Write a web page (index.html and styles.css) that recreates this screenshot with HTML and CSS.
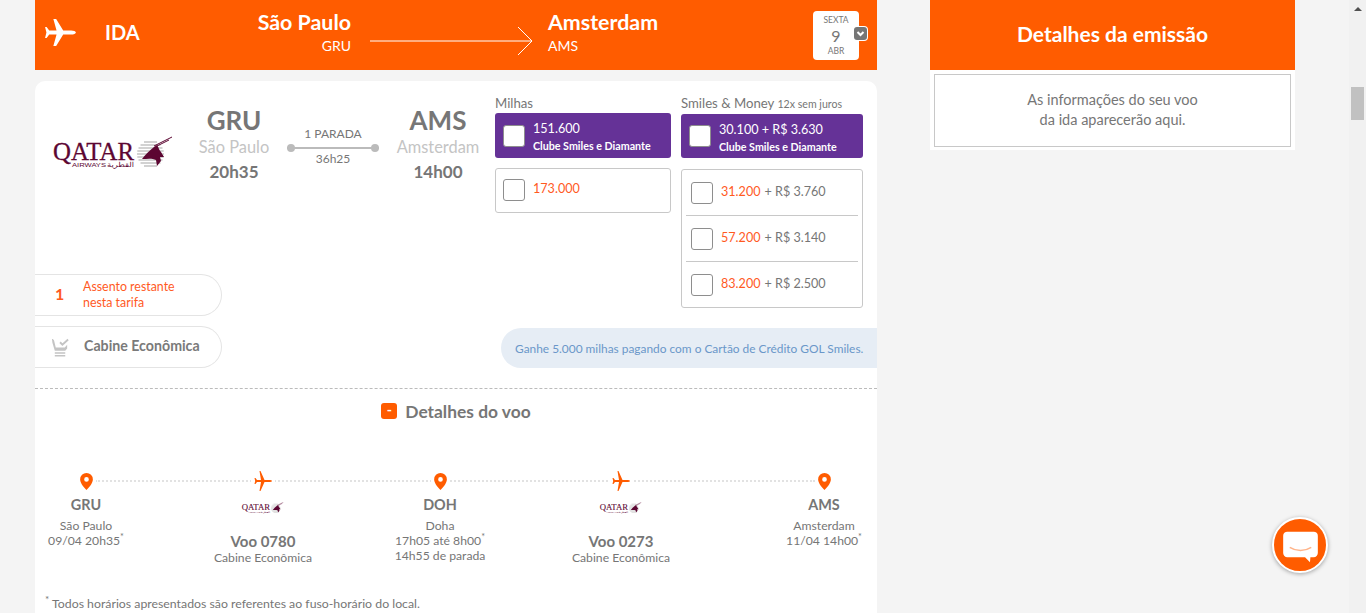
FILE: index.html
```html
<!DOCTYPE html>
<html>
	<head>
		<meta charset="utf-8">
		<title>Detalhes do voo</title>
		<link rel="stylesheet" href="styles.css">
	</head>
	<body>
		<svg class="defs" width="0" height="0">
			<defs>
				<symbol id="plane" viewBox="0 0 32 28">
					<path d="M32 14c0-1.300-2.500-2.200-5-2.200h-8.200L11.500 0H8.600l3.300 11.800H4.300L1.600 8.200H0l1.400 5.800L0 19.800h1.600l2.700-3.600h7.600L8.600 28h2.900l7.300-11.800H27c2.500 0 5-.9 5-2.200z"/>
				</symbol>
				<symbol id="plane-thin" viewBox="0 0 18 20">
					<path d="M18 10c0-.7-1.500-1-3-1H10.500L6.500 0H5.500L7 9H3L1.500 7H.5L1.200 10 .5 13H1.500L3 11H7L5.500 20H6.500L10.500 11H15c1.500 0 3-.3 3-1z"/>
				</symbol>
				<symbol id="pin" viewBox="0 0 12 16">
					<path fill-rule="evenodd" d="M6 0a6 6 0 0 0-6 6c0 3.800 4.500 8.400 6 10 1.500-1.600 6-6.200 6-10a6 6 0 0 0-6-6zm0 3.800a2.200 2.200 0 1 1 0 4.400 2.200 2.200 0 0 1 0-4.400z"/>
				</symbol>
				<symbol id="qatar" viewBox="0 0 122 40">
					<text x="0" y="24" class="q-name" textLength="81" lengthAdjust="spacingAndGlyphs">QATAR</text>
					<text x="19" y="31" class="q-sub" textLength="34" lengthAdjust="spacingAndGlyphs">AIRWAYS</text>
					<text x="54" y="31" class="q-arabic" textLength="27" lengthAdjust="spacingAndGlyphs">القطرية</text>
					<g stroke="#c4c4c4" stroke-width="1.500">
						<path d="M91 6h13M87.500 9h20M85.500 12h24M84.300 15h26.400M84 18h27M84.300 21h26.400M85.500 24h24M87.500 27h20M91 30h13"/>
					</g>
					<path fill="#5c0632" d="M89 23C92 19 96 15 101 11L104 9C106 12 106 14 108 16L111 21 107 21 108 25 104 30 103 24C99 22 94 23 89 23Z"/>
					<path fill="none" stroke="#5c0632" stroke-width="1" d="M101 10 119 1M104 10 116 4"/>
				</symbol>
			</defs>
		</svg>

		<div class="page">
			<!-- coluna do voo -->
			<div class="main">
				<div class="leg-bar">
					<svg class="leg-plane"><use href="#plane"/></svg>
					<span class="leg-type">IDA</span>
					<div class="leg-from">
						<strong>São Paulo</strong>
						<span>GRU</span>
					</div>
					<svg class="leg-arrow" viewBox="0 0 164 30">
						<path d="M0 15h162M148 1l14 14-14 14"/>
					</svg>
					<div class="leg-to">
						<strong>Amsterdam</strong>
						<span>AMS</span>
					</div>
					<div class="leg-date">
						<span>SEXTA</span>
						<b>9</b>
						<span>ABR</span>
						<i class="date-toggle">
							<svg viewBox="0 0 13 13"><path d="M3.500 5 6.500 8 9.500 5"/></svg>
						</i>
					</div>
				</div>

				<div class="card">
					<div class="card-top">
						<div class="flight">
							<div class="route">
								<svg class="logo"><use href="#qatar"/></svg>
								<div class="airport airport-from">
									<b>GRU</b>
									<span>São Paulo</span>
									<strong>20h35</strong>
								</div>
								<div class="stops">
									<span>1 PARADA</span>
									<i class="stops-line"></i>
									<span>36h25</span>
								</div>
								<div class="airport airport-to">
									<b>AMS</b>
									<span>Amsterdam</span>
									<strong>14h00</strong>
								</div>
							</div>
							<div class="pill">
								<b class="pill-num">1</b>
								<span class="pill-seats">Assento restante<br>nesta tarifa</span>
							</div>
							<div class="pill">
								<svg class="pill-seat" viewBox="0 0 20 20">
									<path class="seat-body" d="M1 1c1 0 2 .5 2.300 2L5 10h9.500l2.500-3v4l-2 2.500H4L1.500 5z"/>
									<path class="seat-body" d="M4 15h11v1.500H4zM4 18h11v1.500H4z"/>
									<path class="seat-check" d="M9.500 4.500 12 7 18 1.500"/>
								</svg>
								<span class="pill-cabin">Cabine Econômica</span>
							</div>
						</div>

						<div class="offers">
							<div class="fares">
								<div class="fare-col fare-miles">
									<h4>Milhas</h4>
									<div class="fare-club">
										<i class="check"></i>
										<div class="club-text">
											<p class="club-price">151.600</p>
											<p class="club-name">Clube Smiles e Diamante</p>
										</div>
									</div>
									<div class="fare-list">
										<div class="fare-row">
											<i class="check"></i>
											<span class="miles">173.000</span>
										</div>
									</div>
								</div>
								<div class="fare-col fare-money">
									<h4>Smiles &amp; Money <small>12x sem juros</small></h4>
									<div class="fare-club">
										<i class="check"></i>
										<div class="club-text">
											<p class="club-price">30.100 + R$ 3.630</p>
											<p class="club-name">Clube Smiles e Diamante</p>
										</div>
									</div>
									<div class="fare-list">
										<div class="fare-row">
											<i class="check"></i>
											<span class="miles">31.200</span><span class="money">+ R$ 3.760</span>
										</div>
										<div class="fare-row">
											<i class="check"></i>
											<span class="miles">57.200</span><span class="money">+ R$ 3.140</span>
										</div>
										<div class="fare-row">
											<i class="check"></i>
											<span class="miles">83.200</span><span class="money">+ R$ 2.500</span>
										</div>
									</div>
								</div>
							</div>
							<div class="promo">Ganhe 5.000 milhas pagando com o Cartão de Crédito GOL Smiles.</div>
						</div>
					</div>

					<div class="details">
						<h3 class="details-title"><i class="minus">-</i>Detalhes do voo</h3>
						<div class="timeline">
							<div class="stop">
								<svg class="pin"><use href="#pin"/></svg>
								<b>GRU</b>
								<span>São Paulo</span>
								<span>09/04 20h35<sup>*</sup></span>
							</div>
							<div class="stop">
								<svg class="plane"><use href="#plane-thin"/></svg>
								<svg class="logo-small"><use href="#qatar"/></svg>
								<b>Voo 0780</b>
								<span>Cabine Econômica</span>
							</div>
							<div class="stop">
								<svg class="pin"><use href="#pin"/></svg>
								<b>DOH</b>
								<span>Doha</span>
								<span>17h05 até 8h00<sup>*</sup></span>
								<span>14h55 de parada</span>
							</div>
							<div class="stop">
								<svg class="plane"><use href="#plane-thin"/></svg>
								<svg class="logo-small"><use href="#qatar"/></svg>
								<b>Voo 0273</b>
								<span>Cabine Econômica</span>
							</div>
							<div class="stop stop-last">
								<svg class="pin"><use href="#pin"/></svg>
								<b>AMS</b>
								<span>Amsterdam</span>
								<span>11/04 14h00<sup>*</sup></span>
							</div>
						</div>
						<p class="note"><sup>*</sup> Todos horários apresentados são referentes ao fuso-horário do local.</p>
					</div>
				</div>
			</div>

			<!-- coluna da emissão -->
			<div class="aside">
				<div class="aside-head">Detalhes da emissão</div>
				<div class="aside-body">
					<div class="aside-box">As informações do seu voo<br>da ida aparecerão aqui.</div>
				</div>
			</div>

			<div class="scrollbar">
				<i class="scroll-up"></i>
				<i class="scroll-thumb"></i>
			</div>
		</div>

		<div class="chat">
			<svg viewBox="0 0 44 40">
				<path class="chat-bubble" d="M6 2h32a5 5 0 0 1 5 5v21a5 5 0 0 1-5 5h-4l-.5 6-6-6H6a5 5 0 0 1-5-5V7a5 5 0 0 1 5-5z"/>
				<path class="chat-smile" d="M9 21c8 5 18 5 26 0"/>
			</svg>
		</div>
	</body>
</html>
```

FILE: styles.css
```css
html, body {
	margin: 0;
	height: 613px;
	overflow: hidden;
}

body {
	background: #f4f4f4;
	font-family: "Lato", "Noto Sans", sans-serif;
	color: #767676;
}

.defs {
	display: block;
	height: 0;
}

.q-name {
	font-family: "Liberation Serif", serif;
	font-size: 26px;
	fill: #5c0632;
	stroke: #5c0632;
	stroke-width: 0.3;
}

.q-sub {
	font-family: "Liberation Sans", sans-serif;
	font-size: 6px;
	fill: #5c0632;
}

.q-arabic {
	font-family: "DejaVu Sans", sans-serif;
	font-size: 7px;
	fill: #5c0632;
}

.page {
	display: flex;
	height: 613px;
}

.main {
	width: 842px;
	margin-left: 35px;
}

/* barra laranja */
.leg-bar {
	display: flex;
	align-items: center;
	height: 70px;
	background: #ff5c00;
	color: #fff;
}

.leg-plane {
	width: 31px;
	height: 27px;
	margin: 0 0 6px 10px;
	fill: #fff;
}

.leg-type {
	width: 139px;
	margin: 0 0 6px 29px;
	font-size: 20px;
	font-weight: 700;
}

.leg-from,
.leg-to {
	display: flex;
	flex-direction: column;
	gap: 2px;
	margin-bottom: 7px;
}

.leg-from strong,
.leg-to strong {
	font-size: 21.4px;
	font-weight: 700;
}

.leg-from span,
.leg-to span {
	font-size: 14px;
}

.leg-from {
	width: 107px;
	margin-right: 19px;
	text-align: right;
}

.leg-arrow {
	width: 164px;
	height: 30px;
	margin-top: 12px;
	fill: none;
	stroke: #fff;
	stroke-width: 1;
}

.leg-to {
	width: 265px;
	margin-left: 14px;
}

.leg-date {
	position: relative;
	display: flex;
	flex-direction: column;
	align-items: center;
	width: 46px;
	height: 49px;
	padding-top: 4px;
	box-sizing: border-box;
	border-radius: 4px;
	background: #fff;
	color: #767676;
}

.leg-date span {
	font-size: 8.5px;
	line-height: 10px;
}

.leg-date b {
	font-size: 16px;
	font-weight: 400;
	line-height: 21px;
}

.date-toggle {
	position: absolute;
	top: 16px;
	left: 41px;
	width: 13px;
	height: 13px;
	border-radius: 3px;
	background: #767676;
	box-shadow: 0 0 0 1px #fff;
}

.date-toggle svg {
	display: block;
	fill: none;
	stroke: #fff;
	stroke-width: 2;
}

/* cartão do voo */
.card {
	margin-top: 11px;
	height: 532px;
	border-radius: 10px 10px 0 0;
	background: #fff;
	overflow: hidden;
}

.card-top {
	display: flex;
	height: 307px;
	border-bottom: 1px dashed #bbb;
}

.flight {
	width: 460px;
}

.route {
	display: flex;
	height: 193px;
	padding-top: 24px;
	box-sizing: border-box;
}

.logo {
	width: 122px;
	height: 40px;
	margin: 31px 0 0 18px;
}

.airport {
	display: flex;
	flex-direction: column;
	align-items: center;
	width: 90px;
}

.airport b {
	font-size: 26px;
	line-height: 30px;
	color: #767676;
}

.airport span {
	margin-top: 1px;
	font-size: 16.4px;
	line-height: 22px;
	color: #c4c4c4;
}

.airport strong {
	margin-top: 3px;
	font-size: 17px;
	line-height: 22px;
}

.airport-from {
	margin-left: 14px;
}

.stops {
	display: flex;
	flex-direction: column;
	align-items: center;
	width: 92px;
	margin: 20px 0 0 8px;
	font-size: 12px;
	line-height: 18px;
}

.stops-line {
	position: relative;
	width: 92px;
	height: 2px;
	margin: 4px 0 1px;
	background: #bbb;
}

.stops-line::before,
.stops-line::after {
	content: "";
	position: absolute;
	top: -3px;
	width: 8px;
	height: 8px;
	border-radius: 50%;
	background: #bbb;
}

.stops-line::before {
	left: 0;
}

.stops-line::after {
	right: 0;
}

.airport-to {
	margin-left: 14px;
}

.pill {
	display: flex;
	align-items: center;
	width: 187px;
	height: 42px;
	margin-bottom: 10px;
	box-sizing: border-box;
	border: 1px solid #e4e4e4;
	border-left: 0;
	border-radius: 0 21px 21px 0;
}

.pill-num {
	width: 48px;
	margin-bottom: 3px;
	padding-left: 20px;
	box-sizing: border-box;
	font-size: 16px;
	color: #ff5a1f;
}

.pill-seats {
	font-size: 12.4px;
	line-height: 16px;
	color: #ff5a1f;
}

.pill-seat {
	width: 19px;
	height: 19px;
	margin: 0 14px 0 16px;
}

.seat-body {
	fill: #c4c4c4;
}

.seat-check {
	fill: none;
	stroke: #c4c4c4;
	stroke-width: 2;
}

.pill-cabin {
	margin-bottom: 3px;
	font-size: 14.2px;
	font-weight: 700;
	color: #7a7a7a;
}

/* tarifas */
.offers {
	flex: 1;
	min-width: 0;
}

.fares {
	display: flex;
	gap: 10px;
	margin-top: 14px;
	height: 213px;
}

.fare-miles {
	width: 176px;
}

.fare-money {
	width: 182px;
}

.fare-col h4 {
	margin: 0 0 2px;
	height: 16px;
	font-size: 13.2px;
	font-weight: 400;
	line-height: 16px;
}

.fare-col small {
	font-size: 10.6px;
}

.fare-money h4 {
	margin-bottom: 3px;
}

.fare-club {
	display: flex;
	align-items: center;
	height: 45px;
	padding-left: 8px;
	box-sizing: border-box;
	border-radius: 3px;
	background: #653297;
	color: #fff;
}

.fare-money .fare-club {
	height: 44px;
}

.fare-club p {
	margin: 0;
}

.club-text {
	margin: 2px 0 0 8px;
}

.club-price {
	font-size: 12.6px;
	line-height: 18px;
}

.club-name {
	margin-top: 1px !important;
	font-size: 10.7px;
	font-weight: 700;
	line-height: 14px;
}

.check {
	flex: none;
	display: block;
	width: 22px;
	height: 22px;
	box-sizing: border-box;
	border: 1px solid #8e8e8e;
	border-radius: 3px;
	background: #fff;
}

.fare-list {
	margin-top: 10px;
	box-sizing: border-box;
	border: 1px solid #c8c8c8;
	border-radius: 3px;
}

.fare-money .fare-list {
	margin-top: 11px;
}

.fare-row {
	display: flex;
	align-items: center;
	height: 45px;
	margin: 0 4px;
	padding-left: 5px;
	font-size: 12.6px;
}

.fare-miles .fare-row {
	height: 41px;
	padding: 0 0 2px 3px;
}

.fare-row + .fare-row {
	border-top: 1px solid #c8c8c8;
}

.fare-row .miles,
.fare-row .money {
	margin-bottom: 2px;
}

.fare-row .miles {
	margin-left: 8px;
	color: #ff5a1f;
}

.fare-row .money {
	margin-left: 4px;
}

.promo {
	display: flex;
	align-items: center;
	height: 40px;
	margin: 20px 0 0 6px;
	padding-left: 14px;
	border-radius: 20px 0 0 20px;
	background: #e6edf5;
	font-size: 11.9px;
	color: #6a97c9;
}

/* detalhes */
.details-title {
	display: flex;
	justify-content: center;
	align-items: center;
	gap: 8px;
	margin: 13px 0 0;
	height: 18px;
	font-size: 17.4px;
	color: #767676;
}

.minus {
	display: block;
	width: 16px;
	height: 16px;
	border-radius: 3px;
	background: #ff5c00;
	color: #fff;
	font-style: normal;
	font-size: 14px;
	line-height: 14px;
	text-align: center;
}

.timeline {
	position: relative;
	display: grid;
	grid-template-columns: 102px 252px 102px 260px 126px;
	margin-top: 51px;
}

.timeline::before {
	content: "";
	position: absolute;
	top: 9px;
	left: 60px;
	right: 62px;
	border-top: 2px dotted #e2e2e2;
}

.stop {
	position: relative;
	display: flex;
	flex-direction: column;
	align-items: center;
	font-size: 12.2px;
	line-height: 15px;
}

.stop-last {
	padding-left: 20px;
}

.stop b {
	margin-bottom: 4px;
	font-size: 14.4px;
	line-height: 18px;
	color: #767676;
}

.stop sup {
	font-size: 9px;
	line-height: 0;
}

.pin {
	width: 13px;
	height: 17px;
	margin: 2px 0 6px;
	padding: 0 3px;
	background: #fff;
	fill: #ff5c00;
}

.plane {
	width: 18px;
	height: 20px;
	padding: 0 3px;
	background: #fff;
	fill: #ff5c00;
}

.logo-small {
	width: 44px;
	height: 14px;
	margin: 11px 0 16px;
}

.stop .logo-small + b {
	margin-bottom: 0;
	font-size: 15px;
}

.note {
	margin: 31px 0 0 10px;
	font-size: 12.3px;
	line-height: 16px;
}

.note sup {
	font-size: 10px;
	line-height: 0;
}

/* coluna da direita */
.aside {
	width: 365px;
	margin-left: 53px;
}

.aside-head {
	display: flex;
	align-items: center;
	justify-content: center;
	height: 70px;
	padding-bottom: 3px;
	box-sizing: border-box;
	background: #ff5c00;
	color: #fff;
	font-size: 21px;
	font-weight: 700;
}

.aside-body {
	padding: 4px 4px 3px;
	background: #fff;
}

.aside-box {
	padding: 15px 0 16px;
	border: 1px solid #c8c8c8;
	font-size: 14.5px;
	line-height: 20px;
	text-align: center;
}

.scrollbar {
	display: flex;
	flex-direction: column;
	align-items: center;
	width: 17px;
	margin-left: auto;
	background: #f1f1f1;
}

.scroll-up {
	margin-top: 7px;
	border: 4px solid transparent;
	border-top: 0;
	border-bottom: 4px solid #505050;
}

.scroll-thumb {
	width: 13px;
	height: 33px;
	margin-top: 76px;
	background: #c1c1c1;
}

/* botão de chat */
.chat {
	position: fixed;
	left: 1272px;
	top: 517px;
	display: flex;
	align-items: center;
	justify-content: center;
	width: 56px;
	height: 56px;
	box-sizing: border-box;
	border: 2px solid #fff;
	border-radius: 50%;
	background: #ff5c00;
	box-shadow: 0 1px 4px rgba(0, 0, 0, 0.35);
}

.chat svg {
	width: 37px;
	height: 33px;
	margin-top: 2px;
}

.chat-bubble {
	fill: #fff;
}

.chat-smile {
	fill: none;
	stroke: #ffb48a;
	stroke-width: 2;
}
```
